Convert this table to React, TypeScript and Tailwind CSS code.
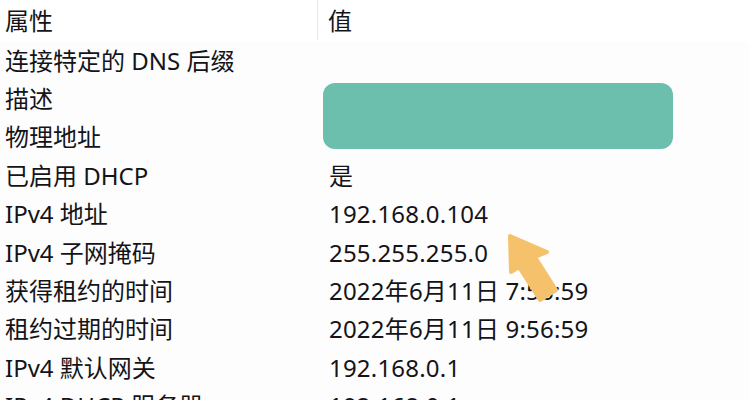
const rows: [string, string][] = [
  ["连接特定的 DNS 后缀", ""],
  ["描述", ""],
  ["物理地址", ""],
  ["已启用 DHCP", "是"],
  ["IPv4 地址", "192.168.0.104"],
  ["IPv4 子网掩码", "255.255.255.0"],
  ["获得租约的时间", "2022年6月11日 7:56:59"],
  ["租约过期的时间", "2022年6月11日 9:56:59"],
  ["IPv4 默认网关", "192.168.0.1"],
  ["IPv4 DHCP 服务器", "192.168.0.1"],
];

const font = { fontFamily: '"Noto Sans", "Noto Sans CJK SC", sans-serif' };

export default function App() {
  return (
    <div
      className="relative w-[749px] h-[400px] overflow-hidden bg-[#fdfdfe] text-[24px] text-[#141418]"
      style={font}
    >
      {/* header */}
      <div className="flex h-[42px] bg-white">
        <div className="w-[318px] pl-[5px] pt-[4px] leading-[34px] border-r border-[#e6e8ec] h-[40px]">
          属性
        </div>
        <div className="pl-[10px] pt-[4px] leading-[34px]">值</div>
      </div>

      {/* rows */}
      <div className="flex flex-col">
        {rows.map(([k, v], i) => (
          <div key={i} className="flex h-[38.4px] items-center pb-px">
            <div className="w-[323px] pl-[5px] leading-none whitespace-nowrap">{k}</div>
            <div className="pl-[6px] leading-none whitespace-nowrap tracking-[0.2px]">{v}</div>
          </div>
        ))}
      </div>

      {/* redaction box over description / MAC values */}
      <div className="absolute left-[323px] top-[83px] w-[350px] h-[66px] rounded-[12px] bg-[#6cbfac]" />

      {/* annotation arrow */}
      <svg className="absolute left-0 top-0 pointer-events-none" width="749" height="400">
        <polygon
          points="510,236 547,252 535,257 556,290 540,300 519,267 511,272"
          fill="#f5c26b"
          stroke="#f5c26b"
          strokeWidth="4"
          strokeLinejoin="round"
        />
      </svg>
    </div>
  );
}
